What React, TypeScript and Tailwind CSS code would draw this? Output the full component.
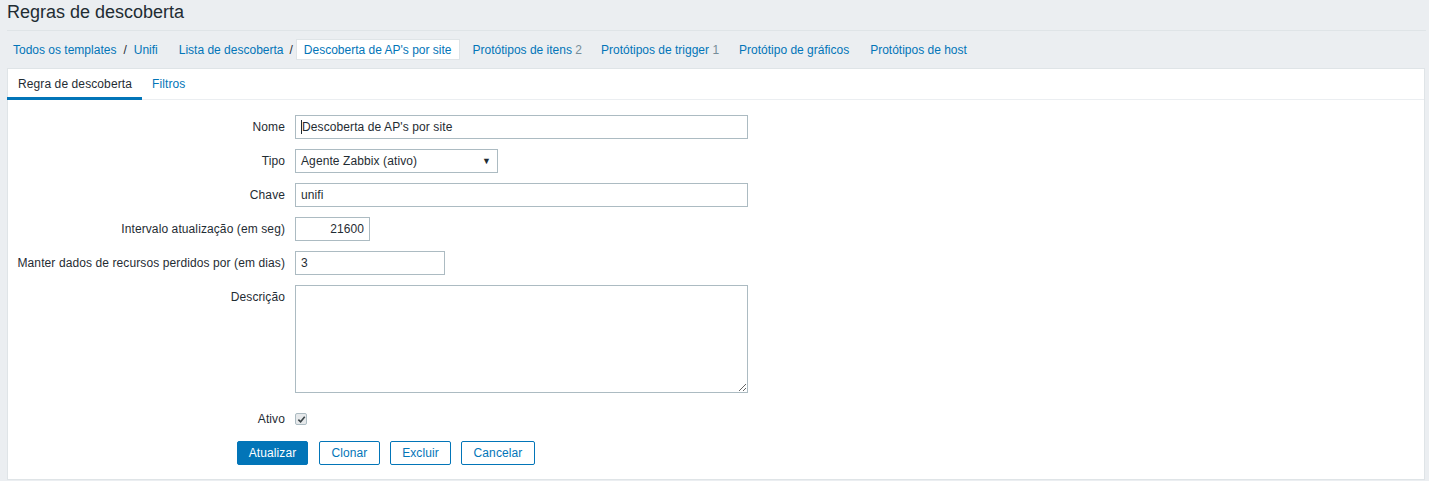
import React from 'react';

const inputCls =
    "h-[24px] border border-[#acbbc2] bg-white px-[5px] text-[12px] tracking-[0.1px] text-[#1f2c33] outline-none";

const FormRow: React.FC<{label: string; top?: boolean; children: React.ReactNode}> = ({label, top, children}) => (
    <>
        <div className={`text-right leading-[24px] ${top ? 'self-start' : 'self-center'}`}>{label}</div>
        <div className="flex items-center">{children}</div>
    </>
);

const App: React.FC = () => {
    return (
        <div className="min-h-screen bg-[#ebeef1] pl-[7px] pr-[3px] font-['Liberation_Sans',Arial,sans-serif] text-[12px] tracking-[0.1px] text-[#1f2c33]">
            {/* Header */}
            <div className="h-[31px] border-b border-[#dfe4e7]">
                <h1 className="text-[18px] leading-[24px] tracking-normal text-[#1f2c33]">Regras de descoberta</h1>
            </div>

            {/* Breadcrumbs / navigation */}
            <nav className="h-[37px] flex items-center pl-[6px] tracking-normal text-[#0275b8]">
                <span>Todos os templates</span>
                <span className="mx-[7px] text-[#1f2c33]">/</span>
                <span>Unifi</span>
                <span className="ml-[21px]">Lista de descoberta</span>
                <span className="ml-[6px] text-[#1f2c33]">/</span>
                <span className="ml-[3px] h-[21px] flex items-center bg-white px-[7px] border border-[#dfe4e7]">Descoberta de AP's por site</span>
                <span className="ml-[13px]">Protótipos de itens <span className="text-[#768d99]">2</span></span>
                <span className="ml-[19px]">Protótipos de trigger <span className="text-[#768d99]">1</span></span>
                <span className="ml-[20px]">Protótipo de gráficos</span>
                <span className="ml-[21px]">Protótipos de host</span>
            </nav>

            {/* Panel */}
            <div className="bg-white border border-[#dfe4e7] mr-[1px]">
                <div className="h-[31px] flex border-b border-[#ebeef1]">
                    <div className="relative px-[10px] leading-[30px] text-[#1f2c33]">
                        Regra de descoberta
                        <div className="absolute left-[-1px] right-0 bottom-[-1px] h-[3px] bg-[#0275b8]" />
                    </div>
                    <div className="px-[10px] leading-[30px] text-[#0275b8]">Filtros</div>
                </div>

                <div className="pt-[15px] pb-[14px]">
                    <div className="grid grid-cols-[277px_1fr] gap-x-[10px] gap-y-[10px]">
                        <FormRow label="Nome">
                            <div className="relative">
                                <input
                                    readOnly
                                    value="Descoberta de AP's por site"
                                    className={`${inputCls} w-[453px] border-[#1f5f8c] pl-[6px]`}
                                />
                                <div className="absolute left-[6px] top-[5px] w-px h-[14px] bg-[#1f2c33]" />
                            </div>
                        </FormRow>
                        <FormRow label="Tipo">
                            <div className={`${inputCls} w-[203px] flex items-center justify-between pr-[6px]`}>
                                <span>Agente Zabbix (ativo)</span>
                                <span className="text-[9px] leading-none">▼</span>
                            </div>
                        </FormRow>
                        <FormRow label="Chave">
                            <input readOnly value="unifi" className={`${inputCls} w-[453px]`} />
                        </FormRow>
                        <FormRow label="Intervalo atualização (em seg)">
                            <input readOnly value="21600" className={`${inputCls} w-[75px] text-right`} />
                        </FormRow>
                        <FormRow label="Manter dados de recursos perdidos por (em dias)">
                            <input readOnly value="3" className={`${inputCls} w-[150px]`} />
                        </FormRow>
                        <FormRow label="Descrição" top>
                            <textarea
                                readOnly
                                className="w-[453px] h-[108px] border border-[#acbbc2] bg-white px-[5px] outline-none"
                            />
                        </FormRow>
                    </div>

                    <div className="grid grid-cols-[277px_1fr] gap-x-[10px] mt-[14px] h-[24px]">
                        <div className="text-right leading-[24px]">Ativo</div>
                        <div className="flex items-center">
                            <div className="w-[12px] h-[12px] border border-[#acbbc2] bg-[#e6e9eb] rounded-[2px] flex items-center justify-center">
                                <svg viewBox="0 0 10 10" className="w-[9px] h-[9px]">
                                    <path d="M1.5 5.2 L4 7.6 L8.6 2" fill="none" stroke="#3b4448" strokeWidth="1.8" />
                                </svg>
                            </div>
                        </div>
                    </div>

                    <div className="flex mt-[10px] ml-[229px]">
                        <button className="h-[24px] w-[71px] bg-[#0275b8] border border-[#0275b8] text-white rounded-[2px]">Atualizar</button>
                        <button className="h-[24px] w-[61px] ml-[11px] bg-white border border-[#0275b8] text-[#0275b8] rounded-[2px]">Clonar</button>
                        <button className="h-[24px] w-[61px] ml-[10px] bg-white border border-[#0275b8] text-[#0275b8] rounded-[2px]">Excluir</button>
                        <button className="h-[24px] w-[74px] ml-[10px] bg-white border border-[#0275b8] text-[#0275b8] rounded-[2px]">Cancelar</button>
                    </div>
                </div>
            </div>
        </div>
    );
};

export default App;
